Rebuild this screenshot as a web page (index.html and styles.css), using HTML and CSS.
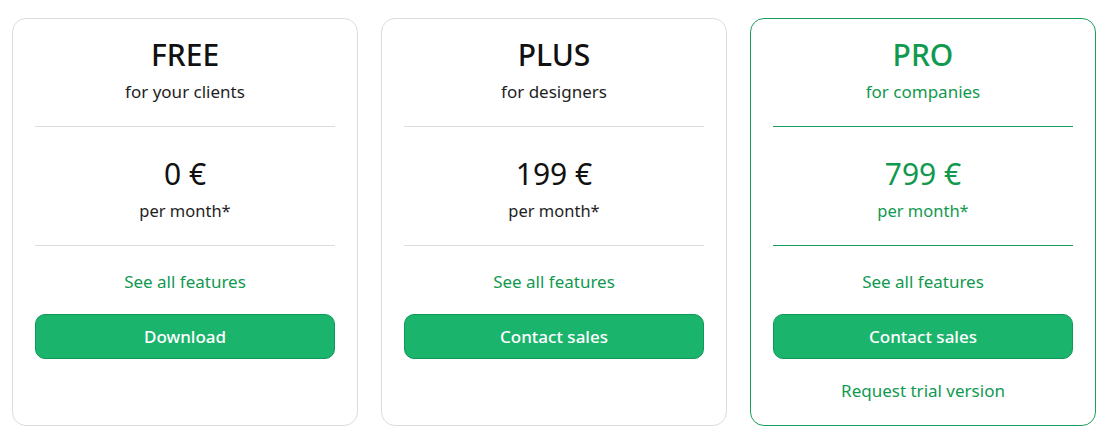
FILE: index.html
```html
<!DOCTYPE html>
<html>
<head>
    <title>Pricing</title>
    <link rel="stylesheet" href="styles.css">
</head>
<body>
    <main class="plans">
        <div class="plan">
            <h2 class="plan-name">FREE</h2>
            <div class="plan-for">for your clients</div>
            <hr class="divider">
            <div class="price">0 €</div>
            <div class="period">per month*</div>
            <hr class="divider">
            <a class="link features" href="#">See all features</a>
            <button class="cta">Download</button>
        </div>
        <div class="plan">
            <h2 class="plan-name">PLUS</h2>
            <div class="plan-for">for designers</div>
            <hr class="divider">
            <div class="price">199 €</div>
            <div class="period">per month*</div>
            <hr class="divider">
            <a class="link features" href="#">See all features</a>
            <button class="cta">Contact sales</button>
        </div>
        <div class="plan plan-pro">
            <h2 class="plan-name">PRO</h2>
            <div class="plan-for">for companies</div>
            <hr class="divider">
            <div class="price">799 €</div>
            <div class="period">per month*</div>
            <hr class="divider">
            <a class="link features" href="#">See all features</a>
            <button class="cta">Contact sales</button>
            <a class="link trial" href="#">Request trial version</a>
        </div>
    </main>
</body>
</html>
```

FILE: styles.css
```css
/* Page */
body {
    margin: 0;
    background: #fff;
    font-family: "Noto Sans", "Open Sans", sans-serif;
    color: #1e1e1e;
}

.plans {
    display: grid;
    grid-template-columns: repeat(3, 346px);
    gap: 23px;
    padding: 18px 12px;
}

/* Card */
.plan {
    display: flex;
    flex-direction: column;
    align-items: center;
    height: 408px;
    box-sizing: border-box;
    padding: 18px 22px 0;
    border: 1px solid #dcdcdc;
    border-radius: 14px;
    text-align: center;
}

.plan-name {
    margin: 0;
    font-size: 30px;
    line-height: 36px;
    font-weight: 500;
    color: #111;
}

.plan-for {
    margin-top: 7px;
    font-size: 17px;
    line-height: 24px;
}

.divider {
    align-self: stretch;
    margin: 22px 0 0;
    border: 0;
    border-top: 1px solid #dcdcdc;
}

.price {
    margin-top: 29px;
    font-size: 30px;
    line-height: 36px;
    font-weight: 400;
    color: #111;
}

.period {
    margin-top: 7px;
    font-size: 16.5px;
    line-height: 24px;
}

.link {
    color: #11994f;
    font-size: 17px;
    line-height: 24px;
    text-decoration: none;
}

.features {
    margin-top: 24px;
}

.cta {
    align-self: stretch;
    margin-top: 20px;
    height: 45px;
    border: 1px solid #0f9957;
    border-radius: 10px;
    background: #1bb46d;
    color: #fff;
    font-family: inherit;
    font-size: 17px;
    font-weight: 500;
    cursor: pointer;
}

.trial {
    margin-top: 20px;
}

/* Highlighted plan */
.plan-pro {
    border-color: #1a9e5e;
}

.plan-pro .plan-name,
.plan-pro .plan-for,
.plan-pro .price,
.plan-pro .period {
    color: #11994f;
}

.plan-pro .divider {
    border-top-color: #1a9e5e;
}
```
